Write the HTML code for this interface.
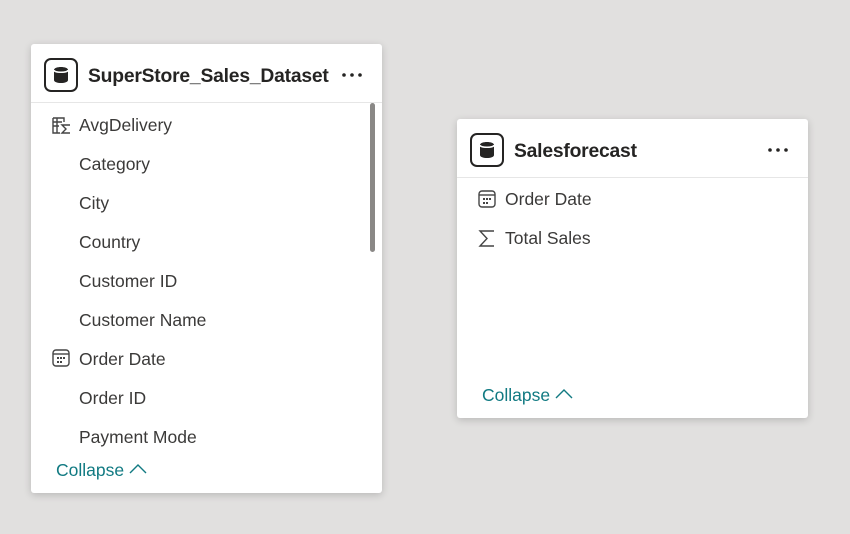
<!DOCTYPE html>
<html><head><meta charset="utf-8"><style>
body{margin:0;width:850px;height:534px;background:#e1e0df;font-family:"Segoe UI","Liberation Sans",sans-serif;position:relative;overflow:hidden}
.card{position:absolute;background:#fff;border-radius:3px;box-shadow:0 2px 8px rgba(0,0,0,.18)}
.hdr{position:absolute;left:0;right:0;top:0;height:58px;border-bottom:1px solid #e6e6e6}
.ttl{position:absolute;left:57px;top:22px;font-size:19.3px;font-weight:bold;color:#252423;letter-spacing:-0.2px}
.dots{position:absolute;top:29px}
.ico{position:absolute;left:13px;top:14px}
.row{position:absolute;font-size:17.5px;color:#3b3a39;line-height:20px}
.ri{position:absolute}
.col{position:absolute;font-size:17.5px;color:#117a82;line-height:20px}
</style></head><body>
<div class="card" style="left:31px;top:44px;width:351px;height:449px">
 <div class="hdr"></div>
 <svg class="ico" width="34" height="34" viewBox="0 0 34 34"><rect x="1" y="1" width="32" height="32" rx="6" fill="none" stroke="#252423" stroke-width="2"/><path d="M10 12 C10 8,24 8,24 12 V22 C24 26,10 26,10 22 Z" fill="#252423"/><path d="M10 12 C10 15,24 15,24 12" fill="none" stroke="#fff" stroke-width="1.5"/></svg>
 <div class="ttl">SuperStore_Sales_Dataset</div>
 <svg class="dots" style="left:311px" width="20" height="4" viewBox="0 0 20 4"><circle cx="2" cy="2" r="1.8" fill="#252423"/><circle cx="10" cy="2" r="1.8" fill="#252423"/><circle cx="18" cy="2" r="1.8" fill="#252423"/></svg>
 <div style="position:absolute;left:339px;top:59px;width:5px;height:149px;background:#8a8886;border-radius:3px"></div>
 <svg class="ri" style="left:20px;top:72px" width="22" height="20" viewBox="0 0 22 20"><path d="M2 2h11v4M2 2v15h7M2 6h9M2 10h6M6 2v15" fill="none" stroke="#444" stroke-width="1.4"/><path d="M19 9h-8l4 4-4 4h8" fill="none" stroke="#444" stroke-width="1.4"/></svg>
 <div class="row" style="left:48px;top:71px">AvgDelivery</div>
 <div class="row" style="left:48px;top:110px">Category</div>
 <div class="row" style="left:48px;top:149px">City</div>
 <div class="row" style="left:48px;top:188px">Country</div>
 <div class="row" style="left:48px;top:227px">Customer ID</div>
 <div class="row" style="left:48px;top:266px">Customer Name</div>
 <svg class="ri" style="left:21px;top:305px" width="18" height="18" viewBox="0 0 18 18"><rect x="1" y="1" width="16" height="16" rx="3" fill="none" stroke="#444" stroke-width="1.4"/><path d="M1 5h16" stroke="#444" stroke-width="1.4"/><g fill="#444"><rect x="5" y="8" width="2" height="2"/><rect x="8" y="8" width="2" height="2"/><rect x="11" y="8" width="2" height="2"/><rect x="5" y="12" width="2" height="2"/><rect x="8" y="12" width="2" height="2"/></g></svg>
 <div class="row" style="left:48px;top:305px">Order Date</div>
 <div class="row" style="left:48px;top:344px">Order ID</div>
 <div class="row" style="left:48px;top:383px">Payment Mode</div>
 <div class="col" style="left:25px;top:416px">Collapse <svg width="18" height="12" viewBox="0 0 18 12" style="vertical-align:1px"><path d="M1 10l8-8 8 8" fill="none" stroke="#117a82" stroke-width="1.4"/></svg></div>
</div>
<div class="card" style="left:457px;top:119px;width:351px;height:299px">
 <div class="hdr"></div>
 <svg class="ico" width="34" height="34" viewBox="0 0 34 34"><rect x="1" y="1" width="32" height="32" rx="6" fill="none" stroke="#252423" stroke-width="2"/><path d="M10 12 C10 8,24 8,24 12 V22 C24 26,10 26,10 22 Z" fill="#252423"/><path d="M10 12 C10 15,24 15,24 12" fill="none" stroke="#fff" stroke-width="1.5"/></svg>
 <div class="ttl">Salesforecast</div>
 <svg class="dots" style="left:311px" width="20" height="4" viewBox="0 0 20 4"><circle cx="2" cy="2" r="1.8" fill="#252423"/><circle cx="10" cy="2" r="1.8" fill="#252423"/><circle cx="18" cy="2" r="1.8" fill="#252423"/></svg>
 <svg class="ri" style="left:21px;top:71px" width="18" height="18" viewBox="0 0 18 18"><rect x="1" y="1" width="16" height="16" rx="3" fill="none" stroke="#444" stroke-width="1.4"/><path d="M1 5h16" stroke="#444" stroke-width="1.4"/><g fill="#444"><rect x="5" y="8" width="2" height="2"/><rect x="8" y="8" width="2" height="2"/><rect x="11" y="8" width="2" height="2"/><rect x="5" y="12" width="2" height="2"/><rect x="8" y="12" width="2" height="2"/></g></svg>
 <div class="row" style="left:48px;top:70px">Order Date</div>
 <svg class="ri" style="left:21px;top:110px" width="18" height="19" viewBox="0 0 18 19"><path d="M16 2H2l7 7.5L2 17h14" fill="none" stroke="#444" stroke-width="1.4"/></svg>
 <div class="row" style="left:48px;top:109px">Total Sales</div>
 <div class="col" style="left:25px;top:266px">Collapse <svg width="18" height="12" viewBox="0 0 18 12" style="vertical-align:1px"><path d="M1 10l8-8 8 8" fill="none" stroke="#117a82" stroke-width="1.4"/></svg></div>
</div>
</body></html>
